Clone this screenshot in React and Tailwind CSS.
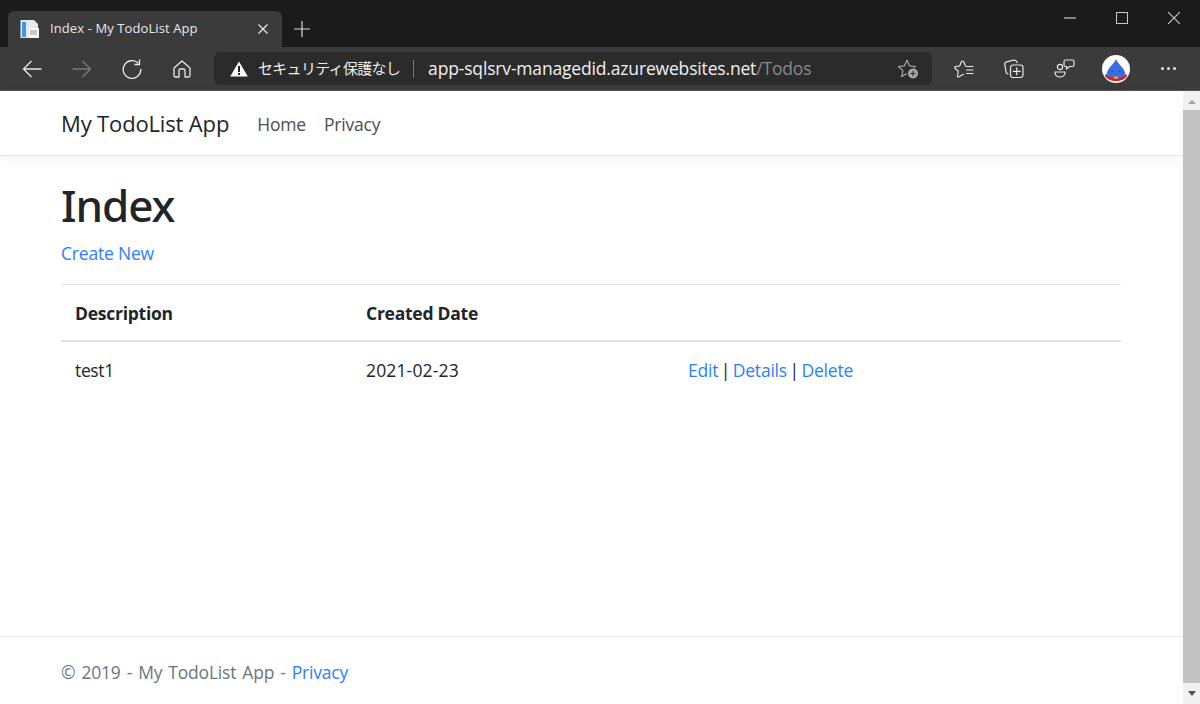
import React from "react";

const F = "[font-family:'Open_Sans','Noto_Sans_CJK_JP',sans-serif]";

function Favicon() {
  return (
    <svg width="20" height="20" viewBox="0 0 20 20">
      <rect x="0.500" y="1" width="7" height="18" fill="#dfe9f0" />
      <rect x="2" y="3" width="4" height="15" fill="#3f97dc" />
      <path d="M7 1h7l4 4v14H7z" fill="#e8e8e8" />
      <rect x="9" y="9" width="10" height="10" fill="#f6f6f6" />
      <rect x="10" y="11" width="7" height="5" fill="#c9c9c9" />
    </svg>
  );
}

function StarPlus() {
  return (
    <svg width="21" height="20" viewBox="0 0 21 20" fill="none">
      <path d="M9 1.200l2.500 5.600 6 .7-4.500 4.100 1.200 6-5.200-3-5.300 3 1.200-6L.5 7.500l6-.7z" stroke="#a8a8a8" strokeWidth="1.2" strokeLinejoin="round" />
      <circle cx="15" cy="14.500" r="6.200" fill="#2b2b2b" />
      <circle cx="15" cy="14.500" r="5" fill="#a8a8a8" />
      <path d="M15 11.800v5.400M12.300 14.500h5.400" stroke="#333" strokeWidth="1.2" />
    </svg>
  );
}

function Favorites() {
  return (
    <svg width="20" height="18" viewBox="0 0 20 18" fill="none" stroke="#e6e6e6" strokeWidth="1.2" strokeLinejoin="round" strokeLinecap="round">
      <path d="M11.500 6L9.700 1.800Q8.500 .2 7.400 1.800L5.600 6 1.500 6.600Q.3 7.200 1.200 8.500L4.300 11.400 3.500 16Q3.500 17.500 5 16.800L9.500 14.300" />
      <path d="M12.500 6.500h6.500M12.500 10h6.500M12.500 13.500h6.500" />
    </svg>
  );
}

function Collections() {
  return (
    <svg width="20" height="19" viewBox="0 0 20 19" fill="none" stroke="#e6e6e6" strokeWidth="1.2" strokeLinecap="round">
      <rect x="6.500" y="6" width="12.500" height="12.500" rx="2.500" />
      <path d="M12.700 8.800v7M9.200 12.300h7" />
      <path d="M4 15c-1-.3-1.800-1-2-2.200L.8 5.500C.6 4.100 1.300 3 2.600 2.800l6.900-1.600c1.700-.3 3 .4 3.700 2.400" />
    </svg>
  );
}

function Feedback() {
  return (
    <svg width="21" height="19" viewBox="0 0 21 19" fill="none" stroke="#e6e6e6" strokeWidth="1.2" strokeLinejoin="round">
      <circle cx="6" cy="8" r="2.600" />
      <path d="M1 13h10v1c0 2.300-2.200 4-5 4s-5-1.700-5-4z" />
      <path d="M11.500 1h7c.8 0 1.500.7 1.500 1.500v3.500c0 .8-.7 1.500-1.500 1.500h-3l-3 2.500V7.500h-1c-.8 0-1.500-.7-1.500-1.500V2.500C10 1.700 10.700 1 11.500 1z" />
    </svg>
  );
}

function Avatar() {
  return (
    <svg width="28" height="28" viewBox="0 0 28 28">
      <circle cx="14" cy="14" r="14" fill="#fff" />
      <path d="M14 4c1 4 8 8 9.500 15 .3 2-1 4-3 4.500H7.500c-2-.5-3.300-2.500-3-4.500C6 12 13 8 14 4z" fill="#3a6ee0" />
      <path d="M3.500 19c3 3.500 7 4.500 10.500 4.500s7.500-1 10.500-4.500l.5 2c-2 3-6 5-11 5s-9-2-11-5z" fill="#e01a1a" />
      <rect x="12" y="21.500" width="4" height="2" fill="#e8b020" />
      <circle cx="10" cy="16" r="1" fill="#2a50b0" />
      <circle cx="18" cy="16" r="1" fill="#2a50b0" />
    </svg>
  );
}

function TitleBar() {
  return (
    <div className="flex h-[47px] bg-[#1b1b1b] items-end pl-2 text-white">
      <div className="flex items-center h-[36px] w-[274px] bg-[#3b3b3b] rounded-t-md pl-3 pr-[13px]">
        <Favicon />
        <span className={`ml-[10px] text-[13px] text-[#e8e8e8] tracking-[0.1px] ${F}`}>Index - My TodoList App</span>
        <svg width="12" height="12" viewBox="0 0 12 12" className="ml-auto" stroke="#e6e6e6" strokeWidth="1.300">
          <path d="M1.500 1.500l9 9M10.500 1.500l-9 9" />
        </svg>
      </div>
      <div className="self-center mt-[11px] ml-[12px]">
        <svg width="16" height="16" viewBox="0 0 16 16" stroke="#d8d8d8" strokeWidth="1.200">
          <path d="M8 0v16M0 8h16" />
        </svg>
      </div>
      <div className="ml-auto self-start flex h-[36px] items-center pb-[1px]">
        <div className="flex w-[52px] justify-center">
          <svg width="12" height="2" viewBox="0 0 12 2" stroke="#c8c8c8" strokeWidth="1.200"><path d="M0 1h12" /></svg>
        </div>
        <div className="flex w-[52px] justify-center">
          <div className="size-[12px] border border-[#c8c8c8]" />
        </div>
        <div className="flex w-[52px] justify-center">
          <svg width="12" height="12" viewBox="0 0 12 12" stroke="#c8c8c8" strokeWidth="1.100"><path d="M0 0l12 12M12 0L0 12" /></svg>
        </div>
      </div>
    </div>
  );
}

function Toolbar() {
  return (
    <div className="flex items-center h-[43px] bg-[#3b3b3b] border-b border-[#555] box-content">
      <div className="flex w-[214px] items-center pl-[22px]">
        <svg width="20" height="18" viewBox="0 0 20 18" fill="none" stroke="#e8e8e8" strokeWidth="1.300">
          <path d="M19.500 9H1.500M9.500 1L1.500 9l8 8" />
        </svg>
        <svg width="20" height="18" viewBox="0 0 20 18" fill="none" stroke="#7a7a7a" strokeWidth="1.300" className="ml-[30px]">
          <path d="M.5 9h18M10.500 1l8 8-8 8" />
        </svg>
        <svg width="20" height="20" viewBox="0 0 20 20" fill="none" stroke="#e8e8e8" strokeWidth="1.300" className="ml-[30px]">
          <path d="M16.300 4.300A8.800 8.800 0 1 0 18.800 10" />
          <path d="M17.500 0.500v5h-5" />
        </svg>
        <svg width="18" height="18" viewBox="0 0 18 18" fill="none" stroke="#e8e8e8" strokeWidth="1.300" strokeLinejoin="round" className="ml-[31px]">
          <path d="M1 8L9 1l8 7v7.500c0 .8-.7 1.500-1.500 1.500H12v-6.500c0-1-.8-1.500-1.500-1.500h-3C6.800 8.500 6 9 6 10v7H2.500C1.700 17 1 16.300 1 15.500z" />
        </svg>
      </div>
      <div className="flex items-center w-[718px] h-[33px] rounded-md bg-[#2b2b2b] pl-[16px] pr-[13px]">
        <svg width="18" height="16" viewBox="0 0 18 16" className="shrink-0">
          <path d="M9 0.500L17.800 15.500H0.200z" fill="#fff" />
          <path d="M8 5h2v6H8zM8 12h2v2H8z" fill="#222" />
        </svg>
        <span className={`ml-[10px] text-[15px] tracking-[-0.7px] text-[#ececec] ${F}`}>セキュリティ保護なし</span>
        <span className="ml-[13px] h-[18px] w-px bg-[#777]" />
        <span className={`ml-[14px] text-[17.500px] tracking-[-0.17px] text-[#f0f0f0] ${F}`}>
          app-sqlsrv-managedid.azurewebsites.net<span className="text-[#8a8a8a]">/Todos</span>
        </span>
        <div className="ml-auto flex"><StarPlus /></div>
      </div>
      <div className="flex flex-1 items-center pl-[22px] text-white">
        <Favorites />
        <div className="ml-[30px] flex"><Collections /></div>
        <div className="ml-[30px] flex"><Feedback /></div>
        <div className="ml-[27px] flex"><Avatar /></div>
        <div className="ml-[31px] flex gap-[3px]">
          <span className="size-[3px] rounded-full bg-[#e6e6e6]" />
          <span className="size-[3px] rounded-full bg-[#e6e6e6]" />
          <span className="size-[3px] rounded-full bg-[#e6e6e6]" />
        </div>
      </div>
    </div>
  );
}

function Scrollbar() {
  return (
    <div className="flex flex-col w-[17px] bg-[#f1f1f1] shrink-0">
      <div className="flex h-[17px] mt-[2px] items-center justify-center">
        <div className="w-0 h-0 border-x-[4px] border-x-transparent border-b-[4px] border-b-[#a3a3a3]" />
      </div>
      <div className="flex-1 bg-[#c1c1c1]" />
      <div className="flex h-[21px] items-center justify-center">
        <div className="w-0 h-0 border-x-[4px] border-x-transparent border-t-[5px] border-t-[#505050]" />
      </div>
    </div>
  );
}

function A({ children }) {
  return <a className="text-[#2d7ff9]">{children}</a>;
}

function Page() {
  return (
    <div className={`flex-1 flex flex-col bg-white text-[#212529] ${F}`}>
      <nav className="flex items-center h-[65px] pt-px pl-[61px] pr-[62px] border-b border-[#e6e6e6] shadow-[0_4px_14px_rgba(0,0,0,0.05)]">
        <span className="text-[22px] tracking-[-0.15px]">My TodoList App</span>
        <span className="ml-[28px] mt-[1px] text-[17.500px] tracking-[-0.2px] text-[#4e4e4e]">Home</span>
        <span className="ml-[18px] mt-[1px] text-[17.500px] tracking-[-0.2px] text-[#4e4e4e]">Privacy</span>
      </nav>
      <main className="pl-[61px] pr-[62px] text-[17.500px] tracking-[-0.2px]">
        <h1 className="mt-[17px] text-[44px] font-medium leading-[64px] tracking-[-1.100px] [font-family:'Noto_Sans',sans-serif]">Index</h1>
        <p className="mt-[2px] leading-[28px]"><A>Create New</A></p>
        <table className="mt-[17px] w-full table-fixed border-collapse">
          <colgroup>
            <col className="w-[291px]" />
            <col className="w-[322px]" />
            <col />
          </colgroup>
          <thead>
            <tr className="h-[56px] border-t border-b-2 border-t-[#dee2e6] border-b-[#dee2e6]">
              <th className="text-left font-bold px-[14px] pt-[1px] tracking-[-0.25px]">Description</th>
              <th className="text-left font-bold px-[14px] pt-[1px] tracking-[-0.25px]">Created Date</th>
              <th />
            </tr>
          </thead>
          <tbody>
            <tr className="h-[59px]">
              <td className="px-[14px] pb-[1px] tracking-[-0.35px]">test1</td>
              <td className="px-[14px] pb-[1px] tracking-[0.15px]">2021-02-23</td>
              <td className="px-[14px] pb-[1px]">
                <A>Edit</A><span className="mx-[2.500px]">|</span><A>Details</A><span className="mx-[2.500px]">|</span><A>Delete</A>
              </td>
            </tr>
          </tbody>
        </table>
      </main>
      <footer className="mt-auto flex items-center h-[68px] pt-[4px] pl-[61px] pr-[62px] border-t border-[#e8e8e8] text-[17.500px] tracking-[-0.2px] [word-spacing:1.700px] text-[#6c757d]">
        <span>© 2019 - My TodoList App - <A>Privacy</A></span>
      </footer>
    </div>
  );
}

export default function App() {
  return (
    <div className="flex flex-col w-[1200px] h-[704px] overflow-hidden">
      <TitleBar />
      <Toolbar />
      <div className="flex flex-1 min-h-0">
        <Page />
        <Scrollbar />
      </div>
    </div>
  );
}
